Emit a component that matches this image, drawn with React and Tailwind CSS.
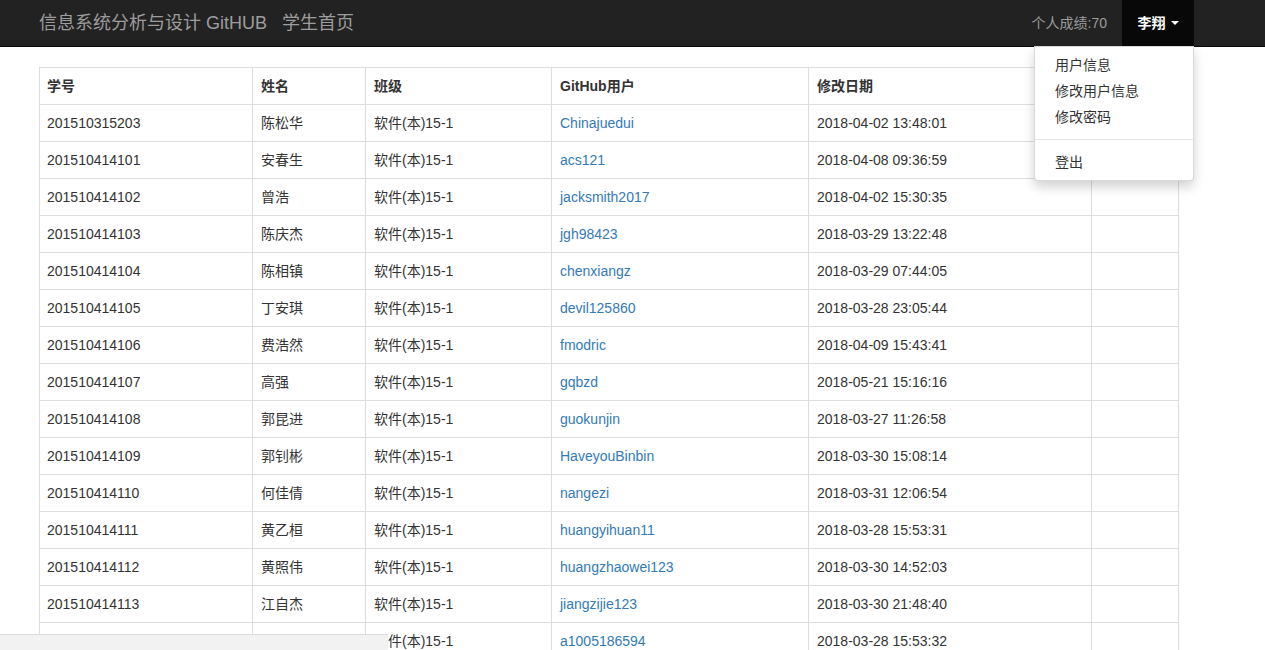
import React from 'react';

const rows = [
    ['201510315203', '陈松华', 'Chinajuedui', '2018-04-02 13:48:01'],
    ['201510414101', '安春生', 'acs121', '2018-04-08 09:36:59'],
    ['201510414102', '曾浩', 'jacksmith2017', '2018-04-02 15:30:35'],
    ['201510414103', '陈庆杰', 'jgh98423', '2018-03-29 13:22:48'],
    ['201510414104', '陈相镇', 'chenxiangz', '2018-03-29 07:44:05'],
    ['201510414105', '丁安琪', 'devil125860', '2018-03-28 23:05:44'],
    ['201510414106', '费浩然', 'fmodric', '2018-04-09 15:43:41'],
    ['201510414107', '高强', 'gqbzd', '2018-05-21 15:16:16'],
    ['201510414108', '郭昆进', 'guokunjin', '2018-03-27 11:26:58'],
    ['201510414109', '郭钊彬', 'HaveyouBinbin', '2018-03-30 15:08:14'],
    ['201510414110', '何佳倩', 'nangezi', '2018-03-31 12:06:54'],
    ['201510414111', '黄乙桓', 'huangyihuan11', '2018-03-28 15:53:31'],
    ['201510414112', '黄照伟', 'huangzhaowei123', '2018-03-30 14:52:03'],
    ['201510414113', '江自杰', 'jiangzijie123', '2018-03-30 21:48:40'],
    ['201510414114', '蒋志远', 'a1005186594', '2018-03-28 15:53:32'],
];

const font = { fontFamily: '"Liberation Sans", "Noto Sans CJK SC", sans-serif' };

export default function App() {
    return (
        <div className="min-h-screen bg-white text-[14px] leading-[20px] text-[#333]" style={font}>
            {/* Navbar */}
            <div className="h-[47px] bg-[#222] border-b border-[#080808]">
                <div className="ml-[24px] w-[1170px] px-[15px] h-full flex items-stretch justify-between">
                    <div className="flex items-center text-[18px] text-[#9d9d9d]">
                        <span>信息系统分析与设计 GitHUB</span>
                        <span className="ml-[15px]">学生首页</span>
                    </div>
                    <div className="flex items-stretch -mr-[15px]">
                        <div className="flex items-center px-[15px] text-[#9d9d9d]">个人成绩:70</div>
                        <div className="relative">
                            <div className="h-[46px] w-[72px] bg-[#080808] flex items-center justify-center text-white font-bold gap-[5px]">
                                <span>李翔</span>
                                <span className="w-0 h-0 border-l-[4px] border-r-[4px] border-t-[4px] border-l-transparent border-r-transparent border-t-white" />
                            </div>
                            <div className="absolute right-0 top-[46px] w-[160px] bg-white border border-[rgba(0,0,0,0.15)] rounded-b-[4px] shadow-[0_6px_12px_rgba(0,0,0,0.175)] py-[5px] z-10 font-normal">
                                <div className="px-[20px] leading-[26px] text-[#333]">用户信息</div>
                                <div className="px-[20px] leading-[26px] text-[#333]">修改用户信息</div>
                                <div className="px-[20px] leading-[26px] text-[#333]">修改密码</div>
                                <div className="my-[9px] h-px bg-[#e5e5e5]" />
                                <div className="px-[20px] leading-[26px] text-[#333]">登出</div>
                            </div>
                        </div>
                    </div>
                </div>
            </div>

            {/* Table */}
            <div className="ml-[24px] w-[1170px] px-[15px] pt-[20px]">
                <table className="w-[1140px] border-collapse border border-[#ddd]">
                    <thead>
                        <tr className="text-left">
                            <th className="w-[213px] border border-[#ddd] pl-[7px] pr-[8px] py-[8px] font-bold">学号</th>
                            <th className="w-[113px] border border-[#ddd] p-[8px] font-bold">姓名</th>
                            <th className="w-[186px] border border-[#ddd] p-[8px] font-bold">班级</th>
                            <th className="w-[257px] border border-[#ddd] p-[8px] font-bold">GitHub用户</th>
                            <th className="w-[283px] border border-[#ddd] p-[8px] font-bold">修改日期</th>
                            <th className="border border-[#ddd] p-[8px] font-bold"></th>
                        </tr>
                    </thead>
                    <tbody>
                        {rows.map((r) => (
                            <tr key={r[0]}>
                                <td className="border border-[#ddd] pl-[7px] pr-[8px] py-[8px]">{r[0]}</td>
                                <td className="border border-[#ddd] p-[8px]">{r[1]}</td>
                                <td className="border border-[#ddd] p-[8px]">软件(本)15-1</td>
                                <td className="border border-[#ddd] p-[8px] text-[#337ab7]">{r[2]}</td>
                                <td className="border border-[#ddd] p-[8px]">{r[3]}</td>
                                <td className="border border-[#ddd] p-[8px]"></td>
                            </tr>
                        ))}
                    </tbody>
                </table>
            </div>

            {/* browser status strip */}
            <div className="fixed left-0 bottom-0 w-[388px] h-[16px] bg-[#f2f2f2] border-t border-[#dcdcdc]" />
        </div>
    );
}
